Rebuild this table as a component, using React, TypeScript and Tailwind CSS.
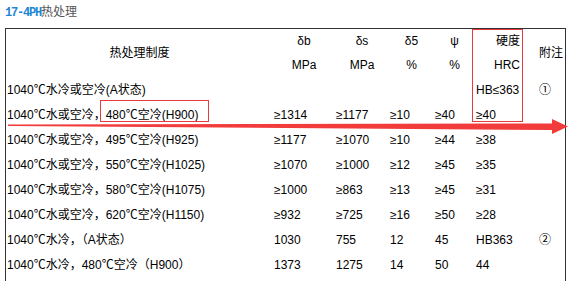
import React from 'react';

type Row = string[];

const rows: Row[] = [
  ['1040℃水冷或空冷(A状态)', '', '', '', '', 'HB≤363', '①'],
  ['1040℃水或空冷，480℃空冷(H900)', '≥1314', '≥1177', '≥10', '≥40', '≥40', ''],
  ['1040℃水或空冷，495℃空冷(H925)', '≥1177', '≥1070', '≥10', '≥44', '≥38', ''],
  ['1040℃水或空冷，550℃空冷(H1025)', '≥1070', '≥1000', '≥12', '≥45', '≥35', ''],
  ['1040℃水或空冷，580℃空冷(H1075)', '≥1000', '≥863', '≥13', '≥45', '≥31', ''],
  ['1040℃水或空冷，620℃空冷(H1150)', '≥932', '≥725', '≥16', '≥50', '≥28', ''],
  ['1040℃水冷，（A状态）', '1030', '755', '12', '45', 'HB363', '②'],
  ['1040℃水冷，480℃空冷（H900）', '1373', '1275', '14', '50', '44', ''],
];

const cols = 'grid grid-cols-[267px_62px_54px_45px_41px_62px_28px]';

export default function App() {
  return (
    <div className="relative w-[579px] h-[281px] overflow-hidden bg-white text-[12px] text-black font-['Liberation_Sans','Noto_Sans_CJK_SC',sans-serif]">
      {/* title */}
      <div className="h-[28px] pl-[5px] pt-[4px] leading-[16px]">
        <span className="font-['Liberation_Mono',monospace] text-[12px] tracking-[-1.2px] font-bold text-[#1f86d6]">17-4PH</span>
        <span className="text-[#555]">热处理</span>
      </div>

      {/* table */}
      <div className="ml-[5px] w-[561px] h-[260px] border border-b-0 border-[#333]">
        <div className={cols}>
          <div className="row-span-2 flex items-center justify-center">热处理制度</div>
          <div className="h-[24px] flex items-center justify-center">δb</div>
          <div className="h-[24px] flex items-center justify-center">δs</div>
          <div className="h-[24px] flex items-center justify-center">δ5</div>
          <div className="h-[24px] flex items-center justify-center">ψ</div>
          <div className="h-[24px] flex items-center justify-end pr-[17px]">硬度</div>
          <div className="row-span-2 flex items-center pl-[2px]">附注</div>
          <div className="h-[24px] flex items-center justify-center">MPa</div>
          <div className="h-[24px] flex items-center justify-center">MPa</div>
          <div className="h-[24px] flex items-center justify-center">%</div>
          <div className="h-[24px] flex items-center justify-center">%</div>
          <div className="h-[24px] flex items-center justify-end pr-[17px]">HRC</div>
        </div>

        {rows.map((r, i) => (
          <div key={i} className={`${cols} h-[25px] items-center`}>
            {r.map((c, j) => (
              <div key={j} className={j === 6 ? 'pl-[2px]' : 'pl-[1px]'}>
                {c}
              </div>
            ))}
          </div>
        ))}
      </div>

      {/* red highlight boxes */}
      <div className="absolute left-[472px] top-[29px] w-[51px] h-[93px] border border-[#e8393c]" />
      <div className="absolute left-[100px] top-[100px] w-[109px] h-[22px] border border-[#e8393c]" />

      {/* red arrow */}
      <svg className="absolute left-0 top-0" width="579" height="281">
        <polygon
          points="8,124.5 552,123.5 552,119 568,126.5 552,134 552,130 8,126"
          fill="#f23b3b"
        />
      </svg>
    </div>
  );
}
